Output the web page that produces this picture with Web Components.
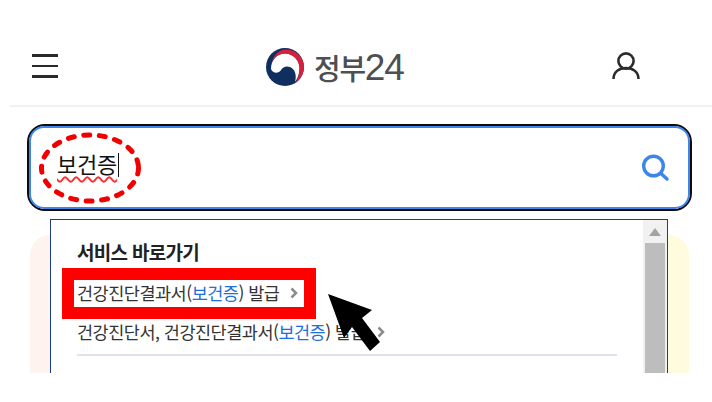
<!DOCTYPE html>
<html lang="ko">
<head>
<meta charset="utf-8">
<title>정부24</title>
<style>
    html, body { margin: 0; padding: 0; background: #fff; }
    body { width: 712px; height: 402px; overflow: hidden; font-family: "Noto Sans CJK KR", "Noto Sans", sans-serif; }
</style>
</head>
<body>
<gov-page>
    <gov-header></gov-header>
    <search-box value="보건증"></search-box>
    <home-cards>
        <suggest-panel title="서비스 바로가기">
            <suggest-item before="건강진단결과서(" match="보건증" after=") 발급"></suggest-item>
            <suggest-item before="건강진단서, 건강진단결과서(" match="보건증" after=") 발급"></suggest-item>
        </suggest-panel>
    </home-cards>
</gov-page>

<script>
class GovPage extends HTMLElement {
    constructor() {
        super();
        this.attachShadow({mode:'open'});
        this.shadowRoot.innerHTML = `
            <style>
                :host { display: block; position: relative; height: 373px; overflow: hidden; background: #fff; }
                .red-box { position: absolute; left: 62px; top: 268px; width: 230px; height: 27px; border: 12px solid #ff0000; }
                .arrow { position: absolute; left: 320px; top: 285px; }
            </style>
            <slot></slot>
            <div class="red-box"></div>
            <svg class="arrow" width="70" height="75" viewBox="320 285 70 75">
                <polygon points="328,294 372,310 362,318 380,342 370,351 352,327 344,338" fill="#000"/>
            </svg>
        `;
    }
}

class GovHeader extends HTMLElement {
    constructor() {
        super();
        this.attachShadow({mode:'open'});
        this.shadowRoot.innerHTML = `
            <style>
                :host { display: grid; grid-template-columns: 255px auto 1fr; align-items: center; height: 105px; margin-left: 10px; border-bottom: 2px solid #f0f0f5; }
                .menu { display: flex; flex-direction: column; gap: 8px; width: 26px; margin-left: 22px; margin-top: 27px; }
                .menu i { display: block; height: 2.500px; background: #2a2a2a; }
                .logo { display: flex; align-items: center; gap: 9px; margin-top: 29px; }
                .logo span { font-size: 29px; font-weight: 500; line-height: 40px; color: #4d4f53; letter-spacing: -1.300px; white-space: nowrap; }
                .logo em { font-family: "Liberation Sans", sans-serif; font-style: normal; font-weight: 400; font-size: 37px; letter-spacing: -1px; }
                .user { justify-self: end; margin-right: 71px; margin-top: 26px; }
                svg { display: block; }
            </style>
            <div class="menu"><i></i><i></i><i></i></div>
            <div class="logo">
                <svg width="40" height="40" viewBox="0 0 40 40">
                    <circle cx="20" cy="20" r="19" fill="#0f2f5f"/>
                    <path d="M6 22C6 13 12 6.500 20 6.500C28 6.500 34.500 13 34.500 21C34.500 26 33 31 30 35C32 28 30 22 25 20C21 18.500 18 20 16 23C14 26.500 8 27 6 22Z" fill="#fff"/>
                    <path d="M6.500 16C9 7 15 2.500 21 2.500C31 2.500 39 10.500 39 20C39 27 35 33 30 36.500C33 32 35 26 34.500 20C33.500 12 27 6.500 20 6.500C14 6.500 9 10 6.500 16Z" fill="#d5213c"/>
                </svg>
                <span>정부<em>24</em></span>
            </div>
            <svg class="user" width="30" height="30" viewBox="0 0 30 30" fill="none" stroke="#2b2b2b" stroke-width="2.600">
                <circle cx="15" cy="10" r="7.600"/>
                <path d="M2.500 28C2.500 21 8 17 15 17C22 17 27.500 21 27.500 28"/>
            </svg>
        `;
    }
}

class SearchBox extends HTMLElement {
    constructor() {
        super();
        this.attachShadow({mode:'open'});
        this.shadowRoot.innerHTML = `
            <style>
                :host { display: block; margin: 17px 20px 0 27px; }
                .outer { position: relative; height: 87px; box-sizing: border-box; border: 2.500px solid #0b0b0b; border-radius: 18px; }
                .inner { display: flex; align-items: center; justify-content: space-between; height: 100%; box-sizing: border-box; border: 2.500px solid #3f86e8; border-radius: 15px; padding: 0 18px 9px 26px; background: #fff; }
                .value { font-family: "Noto Sans CJK KR", sans-serif; font-weight: 400; font-size: 22px; line-height: 30px; color: #111; letter-spacing: -.2px; }
                .value span { text-decoration: underline wavy #ff2a2a 1.500px; text-underline-offset: 3px; }
                .caret { display: inline-block; width: 1px; height: 24px; background: #111; vertical-align: -4px; margin-left: 1px; }
                .ring { position: absolute; left: 9px; top: 5px; }
                .glass { position: relative; top: 5px; }
                svg { display: block; }
            </style>
            <div class="outer">
                <div class="inner">
                    <div class="value"><span id="value"></span><i class="caret"></i></div>
                    <svg class="glass" width="30" height="30" viewBox="0 0 30 30" fill="none" stroke="#3b86e6" stroke-width="3.400" stroke-linecap="round">
                        <circle cx="13.500" cy="13" r="9.800"/>
                        <path d="M21 20.500L27 26"/>
                    </svg>
                </div>
                <svg class="ring" width="104" height="74" viewBox="0 0 104 74" fill="none">
                    <ellipse cx="52" cy="37" rx="48.500" ry="33" stroke="#f00000" stroke-width="5" stroke-linecap="round" stroke-dasharray="6 9.600"/>
                </svg>
            </div>
        `;
        this.shadowRoot.querySelector('#value').textContent = this.getAttribute('value');
    }
}

class HomeCards extends HTMLElement {
    constructor() {
        super();
        this.attachShadow({mode:'open'});
        this.shadowRoot.innerHTML = `
            <style>
                :host { display: block; position: relative; margin: 8px 23px 0 30px; height: 160px; }
                .cards { display: grid; grid-template-columns: 1fr 1fr; padding-top: 16px; height: 100%; box-sizing: border-box; }
                .cards div { height: 200px; }
                .pink { background: #fff3ef; border-radius: 20px 0 0 0; }
                .yellow { background: #fffbdf; border-radius: 0 20px 0 0; }
                .over { position: absolute; left: 20px; right: 21px; top: 0; }
            </style>
            <div class="cards"><div class="pink"></div><div class="yellow"></div></div>
            <div class="over"><slot></slot></div>
        `;
    }
}

class SuggestPanel extends HTMLElement {
    constructor() {
        super();
        this.attachShadow({mode:'open'});
        this.shadowRoot.innerHTML = `
            <style>
                :host { display: flex; background: #fff; border: 1px solid #1d3f7f; height: 200px; box-sizing: border-box; }
                .body { flex: 1; padding: 17px 26px 0 26px; min-width: 0; }
                h2 { margin: 0 0 13px; font-size: 19px; line-height: 30px; font-weight: 700; color: #222; letter-spacing: -.7px; }
                .list { padding-bottom: 9px; border-bottom: 2px solid #dfe2ea; display: flex; flex-direction: column; gap: 13px; }
                .bar { flex: none; width: 24px; background: #f1f1f1; display: flex; flex-direction: column; align-items: center; }
                .up { width: 0; height: 0; margin: 8px 0 7px; border: 6px solid transparent; border-top: 0; border-bottom: 8px solid #a3a3a3; }
                .thumb { flex: 1; width: 20px; background: #bdbdbd; }
            </style>
            <div class="body">
                <h2 id="title"></h2>
                <div class="list"><slot></slot></div>
            </div>
            <div class="bar"><i class="up"></i><i class="thumb"></i></div>
        `;
        this.shadowRoot.querySelector('#title').textContent = this.getAttribute('title');
    }
}

class SuggestItem extends HTMLElement {
    constructor() {
        super();
        this.attachShadow({mode:'open'});
        this.shadowRoot.innerHTML = `
            <style>
                :host { display: flex; align-items: center; gap: 11px; font-size: 17.500px; line-height: 26px; color: #333; letter-spacing: -.5px; white-space: nowrap; }
                b { font-weight: 400; color: #1f6fd8; }
                svg { display: block; }
            </style>
            <span><span id="before"></span><b id="match"></b><span id="after"></span></span>
            <svg width="8" height="12" viewBox="0 0 8 12" fill="none" stroke="#8b8b8b" stroke-width="2.500"><path d="M1.500 1.500L6 6L1.500 10.500"/></svg>
        `;
        this.shadowRoot.querySelector('#before').textContent = this.getAttribute('before');
        this.shadowRoot.querySelector('#match').textContent = this.getAttribute('match');
        this.shadowRoot.querySelector('#after').textContent = this.getAttribute('after');
    }
}

window.customElements.define('gov-page', GovPage);
window.customElements.define('gov-header', GovHeader);
window.customElements.define('search-box', SearchBox);
window.customElements.define('home-cards', HomeCards);
window.customElements.define('suggest-panel', SuggestPanel);
window.customElements.define('suggest-item', SuggestItem);
</script>
</body>
</html>
